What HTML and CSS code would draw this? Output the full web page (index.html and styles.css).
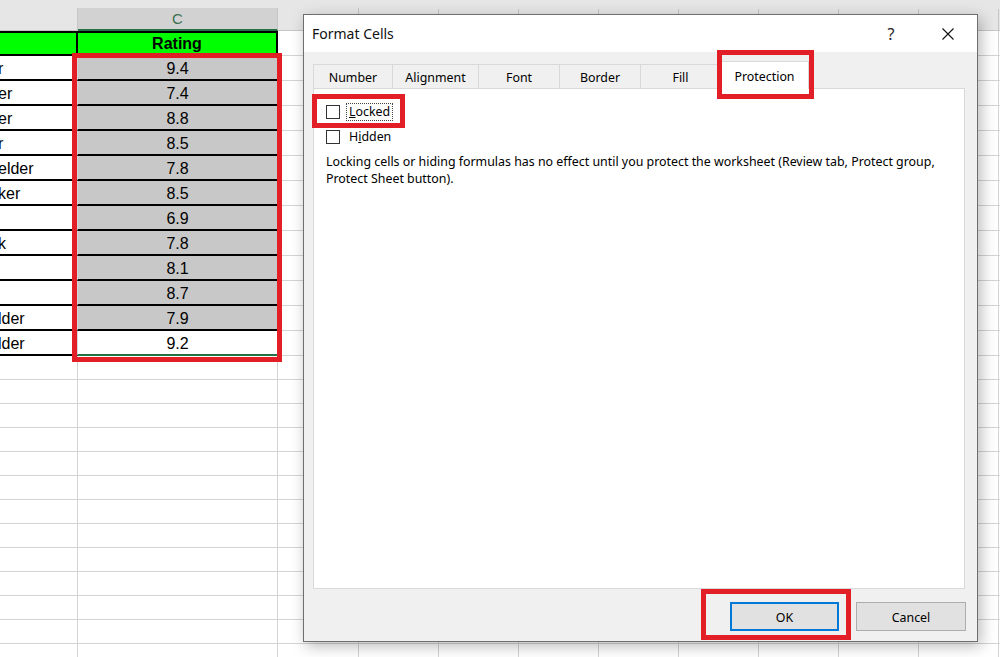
FILE: index.html
```html
<!DOCTYPE html>
<html lang="en">
<head>
  <meta charset="UTF-8">
  <meta name="viewport" content="width=device-width, initial-scale=1.0">
  <title>Format Cells</title>
  <link rel="stylesheet" href="styles.css">
</head>
<body>
  <div class="sheet">
    <div class="topstrip"></div>

    <div class="row head">
      <div class="a"></div>
      <div class="c">C</div>
      <div class="d">D</div>
      <div class="rest">
        <span>E</span><span>F</span><span>G</span><span>H</span>
        <span>I</span><span>J</span><span>K</span><span>L</span>
      </div>
    </div>

    <div class="row title">
      <div class="a"></div>
      <div class="c">Rating</div>
      <div class="d"></div>
      <div class="rest"></div>
    </div>

    <div class="row"><div class="a">r</div><div class="c">9.4</div><div class="d"></div><div class="rest"></div></div>
    <div class="row"><div class="a">er</div><div class="c">7.4</div><div class="d"></div><div class="rest"></div></div>
    <div class="row"><div class="a">er</div><div class="c">8.8</div><div class="d"></div><div class="rest"></div></div>
    <div class="row"><div class="a">r</div><div class="c">8.5</div><div class="d"></div><div class="rest"></div></div>
    <div class="row"><div class="a">elder</div><div class="c">7.8</div><div class="d"></div><div class="rest"></div></div>
    <div class="row"><div class="a">ker</div><div class="c">8.5</div><div class="d"></div><div class="rest"></div></div>
    <div class="row"><div class="a"></div><div class="c">6.9</div><div class="d"></div><div class="rest"></div></div>
    <div class="row"><div class="a">k</div><div class="c">7.8</div><div class="d"></div><div class="rest"></div></div>
    <div class="row"><div class="a"></div><div class="c">8.1</div><div class="d"></div><div class="rest"></div></div>
    <div class="row"><div class="a"></div><div class="c">8.7</div><div class="d"></div><div class="rest"></div></div>
    <div class="row"><div class="a">lder</div><div class="c">7.9</div><div class="d"></div><div class="rest"></div></div>
    <div class="row"><div class="a">lder</div><div class="c last">9.2</div><div class="d"></div><div class="rest"></div></div>

    <div class="empty">
      <div class="a"></div>
      <div class="c"></div>
      <div class="d"></div>
      <div class="rest"></div>
    </div>
  </div>

  <div class="dialog">
    <div class="titlebar">
      <span class="caption">Format Cells</span>
      <span class="help">?</span>
      <span class="close">
        <svg width="12" height="12" viewBox="0 0 12 12">
          <path d="M0.5 0.5 L11.5 11.5 M11.5 0.5 L0.5 11.5" stroke="#111" stroke-width="1.1" fill="none"/>
        </svg>
      </span>
    </div>

    <div class="content">
      <div class="tabs">
        <div class="tab t-number">Number</div>
        <div class="tab t-align">Alignment</div>
        <div class="tab t-font">Font</div>
        <div class="tab t-border">Border</div>
        <div class="tab t-fill">Fill</div>
        <div class="tab t-prot active">Protection</div>
      </div>

      <div class="panel">
        <div class="option">
          <span class="box"></span>
          <span class="label focused"><u>L</u>ocked</span>
        </div>
        <div class="option">
          <span class="box"></span>
          <span class="label">H<u>i</u>dden</span>
        </div>
        <p class="note">Locking cells or hiding formulas has no effect until you protect the worksheet (Review tab, Protect group, Protect Sheet button).</p>
      </div>

      <div class="footer">
        <button class="btn default">OK</button>
        <button class="btn cancel">Cancel</button>
      </div>
    </div>
  </div>

  <div class="mark mark-col"></div>
  <div class="mark mark-tab"></div>
  <div class="mark mark-locked"></div>
  <div class="mark mark-ok"></div>
</body>
</html>
```

FILE: styles.css
```css
html, body {
  margin: 0;
  padding: 0;
}
body {
  width: 1000px;
  height: 657px;
  overflow: hidden;
  background: #fff;
  position: relative;
  font-family: "Liberation Sans", Arial, sans-serif;
  font-size: 16px;
  color: #000;
}

/* spreadsheet */
.topstrip {
  height: 8px;
  background: #e6e6e6;
}
.row {
  display: flex;
  height: 25px;
}
.row > div, .empty > div {
  box-sizing: border-box;
}
.row .a {
  width: 78px;
  border-right: 1px solid #d4d4d4;
  border-bottom: 2px solid #000;
  padding-top: 2px;
  line-height: 21px;
  white-space: nowrap;
  overflow: hidden;
  text-indent: -2px;
}
.row .c {
  width: 200px;
  border-right: 1px solid #d4d4d4;
  border-bottom: 2px solid #000;
  background: #c8c8c8;
  text-align: center;
  padding-top: 2px;
  line-height: 21px;
}
.row .c.last {
  background: #fff;
  border-bottom-color: #217346;
}
.row .d {
  width: 81px;
  border-right: 1px solid #d4d4d4;
  border-bottom: 1px solid #d4d4d4;
}
.row .rest {
  flex: 1;
  border-bottom: 1px solid #d4d4d4;
  background-image: repeating-linear-gradient(to right, transparent 0 79px, #d4d4d4 79px 80px);
}

.row.head {
  height: 23px;
  background: #e6e6e6;
  font-size: 15px;
  color: #444;
}
.row.head > div {
  border-bottom: 1px solid #c6c6c6;
  border-right: 1px solid #c6c6c6;
  background: #e6e6e6;
  padding-top: 1px;
  line-height: 21px;
  text-align: center;
}
.row.head .c {
  background: #d2d2d2;
  border-bottom: 2px solid #217346;
  color: #3b6e4e;
  line-height: 20px;
}
.row.head .rest {
  display: flex;
  border-right: none;
  background-image: none;
}
.row.head .rest span {
  width: 80px;
  flex: none;
  box-sizing: border-box;
  border-right: 1px solid #c6c6c6;
}

.row.title .a, .row.title .c {
  background: #00ff00;
  border-top: 2px solid #000;
  border-right: 2px solid #000;
  padding-top: 0;
  line-height: 21px;
  font-weight: bold;
}

.empty {
  display: flex;
  height: 301px;
}
.empty > div {
  background-image: repeating-linear-gradient(to bottom, transparent 0 23px, #d4d4d4 23px 24px);
}
.empty .a { width: 78px; border-right: 1px solid #d4d4d4; }
.empty .c { width: 200px; border-right: 1px solid #d4d4d4; }
.empty .d { width: 81px; border-right: 1px solid #d4d4d4; }
.empty .rest {
  flex: 1;
  background-image:
    repeating-linear-gradient(to bottom, transparent 0 23px, #d4d4d4 23px 24px),
    repeating-linear-gradient(to right, transparent 0 79px, #d4d4d4 79px 80px);
}

/* dialog */
.dialog {
  position: absolute;
  left: 303px;
  top: 14px;
  width: 675px;
  height: 628px;
  box-sizing: border-box;
  border: 1px solid #6e6e6e;
  background: #f0f0f0;
  box-shadow: 3px 4px 14px rgba(0,0,0,0.28);
  display: flex;
  flex-direction: column;
  font-family: "Noto Sans", "Open Sans", sans-serif;
  font-size: 12.4px;
  color: #000;
}
.titlebar {
  height: 37px;
  flex: none;
  background: #fff;
  display: flex;
  align-items: center;
  padding-left: 8px;
}
.caption {
  font-size: 14px;
  color: #111;
}
.help {
  margin-left: auto;
  width: 30px;
  margin-right: 19px;
  text-align: center;
  font-size: 16px;
  color: #222;
}
.close {
  width: 46px;
  margin-right: 6px;
  display: flex;
  justify-content: center;
  align-items: center;
}
.content {
  flex: 1;
  padding: 9px 11px 0 9px;
}
.tabs {
  display: flex;
  align-items: flex-end;
  height: 27px;
}
.tab {
  box-sizing: border-box;
  height: 24px;
  padding-top: 2px;
  line-height: 22px;
  border: 1px solid #d9d9d9;
  border-bottom: none;
  margin-right: -1px;
  text-align: center;
  background: #f0f0f0;
}
.t-number { width: 80px; }
.t-align { width: 87px; }
.t-font { width: 82px; }
.t-border { width: 82px; }
.t-fill { width: 81px; }
.t-prot { width: 89px; }
.tab.active {
  height: 28px;
  padding-top: 1px;
  line-height: 28px;
  background: #fff;
  margin-bottom: -1px;
  position: relative;
  z-index: 1;
}
.panel {
  box-sizing: border-box;
  width: 652px;
  height: 501px;
  background: #fff;
  border: 1px solid #d9d9d9;
  padding: 14px 12px 0 12px;
}
.option {
  display: flex;
  align-items: center;
  height: 18px;
  margin-bottom: 7px;
}
.box {
  width: 14px;
  height: 14px;
  box-sizing: border-box;
  border: 1px solid #333;
  background: #fff;
}
.label {
  margin-left: 6px;
  padding: 0 2px;
  border: 1px dotted transparent;
  line-height: 16px;
}
.label.focused {
  border-color: #444;
}
.note {
  margin: 6px 0 0;
  line-height: 17px;
  max-width: 625px;
}
.footer {
  display: flex;
  justify-content: flex-end;
  gap: 17px;
  padding-top: 13px;
}
.btn {
  height: 29px;
  box-sizing: border-box;
  background: #e1e1e1;
  border: 1px solid #adadad;
  font-family: "Noto Sans", "Open Sans", sans-serif;
  font-size: 12.4px;
  color: #000;
  padding: 1px 0 0;
}
.btn.default {
  width: 109px;
  border: 2px solid #0078d7;
}
.btn.cancel {
  width: 110px;
}

/* red annotation boxes */
.mark {
  position: absolute;
  box-sizing: border-box;
  border: 5px solid #e21f26;
  z-index: 5;
}
.mark-col { left: 72px; top: 53px; width: 210px; height: 309px; }
.mark-tab { left: 717px; top: 50px; width: 97px; height: 49px; }
.mark-locked { left: 312px; top: 94px; width: 93px; height: 34px; }
.mark-ok { left: 701px; top: 589px; width: 150px; height: 51px; }
```
